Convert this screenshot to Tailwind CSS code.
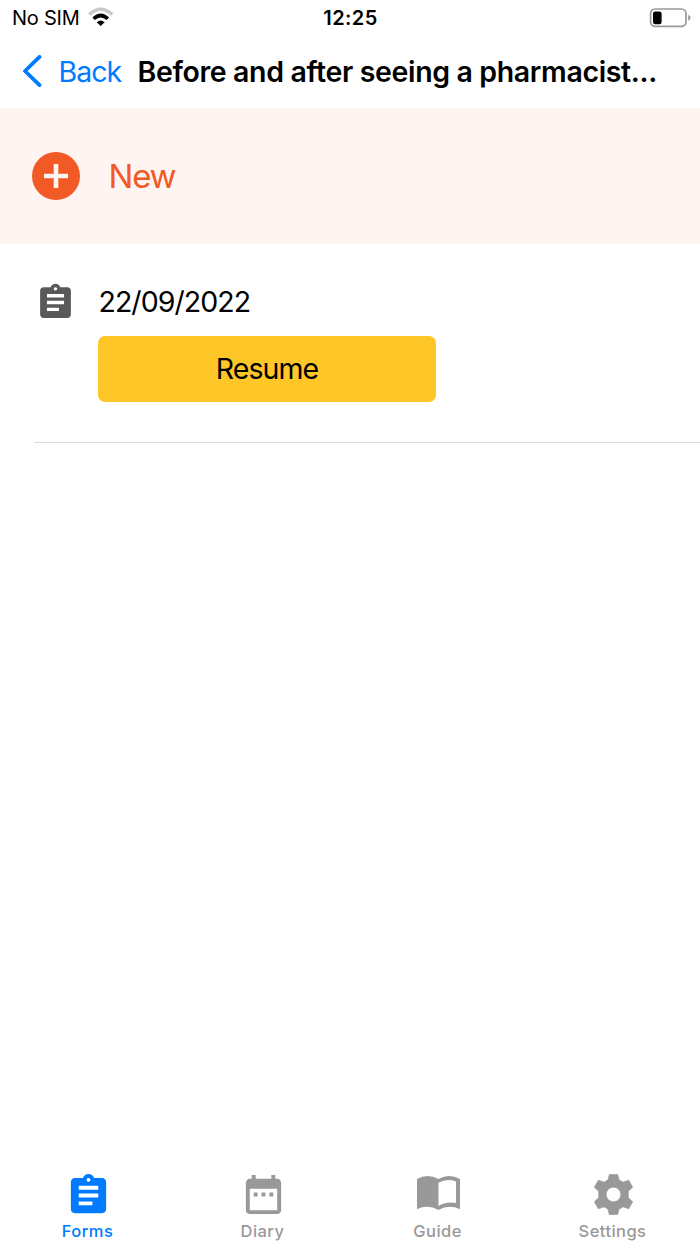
<!DOCTYPE html>
<html lang="en">
<head>
<meta charset="utf-8">
<title>Forms</title>
<script src="https://cdn.jsdelivr.net/npm/@tailwindcss/browser@4"></script>
</head>
<body class="bg-white">
<div class="w-[700px] h-[1244px] flex flex-col overflow-hidden bg-white text-black font-['Inter','Liberation_Sans',sans-serif]">
  <header class="h-[108px] shrink-0">
    <div class="h-9 grid grid-cols-3 items-center pl-3 pr-[9px]">
      <div class="flex items-center gap-2">
        <span class="text-[20px] leading-9 tracking-[-0.25px] whitespace-nowrap">No SIM</span>
        <svg class="w-[26px] h-[20px] overflow-visible" viewBox="87 8 26 20" fill="none">
          <path d="M89.2 14.6Q100.7 4 112.2 14.6" stroke="#c9c9c9" stroke-width="3.4"/>
          <path d="M93.6 18.8Q100.7 12.2 107.800 18.8" stroke="#000" stroke-width="3.6"/>
          <path d="M100.7 25.9L96.7 22.2Q100.7 19 104.700 22.2Z" fill="#000"/>
        </svg>
      </div>
      <div class="text-center text-[20px] leading-9 font-semibold tracking-[0.4px] -ml-[2px]">12:25</div>
      <svg class="justify-self-end w-[42px] h-[20px] -mt-px" viewBox="0 0 42 20">
        <rect x="1.6" y="1" width="35.4" height="17.4" rx="4.6" fill="none" stroke="#999" stroke-width="1.7"/>
        <rect x="4" y="3.6" width="8.6" height="12.6" rx="2.2" fill="#000"/>
        <path d="M39.2 6.8Q41.6 7.6 41.6 9.8T39.2 12.8Z" fill="#999"/>
      </svg>
    </div>
    <div class="h-[71px] flex items-center pl-[22px]">
      <svg class="w-[21px] h-8 mr-[15.500px] -mt-px" viewBox="0 0 21 32" fill="none" stroke="#007aff" stroke-width="3.8" stroke-linecap="round" stroke-linejoin="round"><path d="M17.500 1.900L3 16L17.500 30.100"/></svg>
      <a class="text-[28.5px] text-[#007aff] tracking-[-1px] whitespace-nowrap w-[79px] pt-px">Back</a>
      <h1 class="text-[28.5px] font-semibold tracking-[-0.36px] whitespace-nowrap pt-px">Before and after seeing a pharmacist...</h1>
    </div>
  </header>
  <main class="flex-1">
    <div class="h-[136px] bg-[#fef4f1] flex items-center pl-8">
      <svg class="w-12 h-12" viewBox="0 0 48 48"><circle cx="24" cy="24" r="24" fill="#f15a24"/><path d="M24 12V36M12 24H36" stroke="#fef4f1" stroke-width="4.6"/></svg>
      <span class="ml-[28.5px] pt-px text-[33px] text-[#f15a24] tracking-[-1.2px]">New</span>
    </div>
    <div class="ml-[34px] h-[199px] border-b border-[#dcdcdc] flex pt-[38px]">
      <svg class="w-[41px] h-[41px] ml-[1px] shrink-0" viewBox="0 0 24 24" fill="#595959"><path d="M19 3h-4.18C14.4 1.84 13.3 1 12 1c-1.3 0-2.4.84-2.82 2H5c-1.1 0-2 .9-2 2v14c0 1.1.9 2 2 2h14c1.1 0 2-.9 2-2V5c0-1.1-.9-2-2-2zm-7 0c.55 0 1 .45 1 1s-.45 1-1 1-1-.45-1-1 .45-1 1-1zm2 14H7v-2h7v2zm3-4H7v-2h10v2zm0-4H7V7h10v2z"/></svg>
      <div class="ml-[22px]">
        <div class="text-[28.5px] leading-10 tracking-[-0.95px] pl-[0.5px]">22/09/2022</div>
        <button class="mt-[14px] w-[338px] h-[66px] rounded-[7px] bg-[#ffc627] text-[28.5px] tracking-[-0.9px] block">Resume</button>
      </div>
    </div>
  </main>
  <nav class="h-[76px] shrink-0 grid grid-cols-4 text-[#999] text-[16.5px] tracking-[0.45px] font-medium text-center">
    <div class="flex flex-col items-center text-[#007aff]">
      <svg class="w-[47px] h-[47px] mt-[4px] ml-px" viewBox="0 0 24 24" fill="currentColor"><path d="M19 3h-4.18C14.4 1.84 13.3 1 12 1c-1.3 0-2.4.84-2.82 2H5c-1.1 0-2 .9-2 2v14c0 1.1.9 2 2 2h14c1.1 0 2-.9 2-2V5c0-1.1-.9-2-2-2zm-7 0c.55 0 1 .45 1 1s-.45 1-1 1-1-.45-1-1 .45-1 1-1zm2 14H7v-2h7v2zm3-4H7v-2h10v2zm0-4H7V7h10v2z"/></svg>
      <span class="leading-6">Forms</span>
    </div>
    <div class="flex flex-col items-center">
      <svg class="w-[47px] h-[47px] mt-[3px] mb-px ml-[2px]" viewBox="0 0 24 24" fill="currentColor"><path d="M9 11H7v2h2v-2zm4 0h-2v2h2v-2zm4 0h-2v2h2v-2zm2-7h-1V2h-2v2H8V2H6v2H5c-1.11 0-1.99.9-1.99 2L3 20c0 1.1.89 2 2 2h14c1.1 0 2-.9 2-2V6c0-1.1-.9-2-2-2zm0 16H5V9h14v11z"/></svg>
      <span class="leading-6">Diary</span>
    </div>
    <div class="flex flex-col items-center">
      <svg class="w-[43px] h-[47px] mt-[4px] ml-px" viewBox="0 0 43 47" fill="currentColor"><path fill-rule="evenodd" d="M0 7Q10.500 1 21.500 7Q32 1 43 7V37.200Q32 32 21.500 38Q11 32 0 37.200ZM21.500 10.700V34Q29 29 39 31V9.500Q30 6 21.500 10.700Z"/></svg>
      <span class="leading-6">Guide</span>
    </div>
    <div class="flex flex-col items-center">
      <svg class="w-[49px] h-[49px] mt-[2px] ml-[2px]" viewBox="11 6.5 147 147" fill="currentColor" stroke="currentColor" stroke-width="2" stroke-linejoin="round"><path fill-rule="evenodd" d="M72 20H97L101 36L113 43L130 37L142 58L129 70V90L142 102L130 123L113 117L101 124L97 140H72L68 124L56 117L39 123L27 102L40 90V70L27 58L39 37L56 43L68 36ZM84.500 58A22 22 0 1 0 84.500 102A22 22 0 1 0 84.500 58Z"/></svg>
      <span class="leading-6">Settings</span>
    </div>
  </nav>
</div>
</body>
</html>
